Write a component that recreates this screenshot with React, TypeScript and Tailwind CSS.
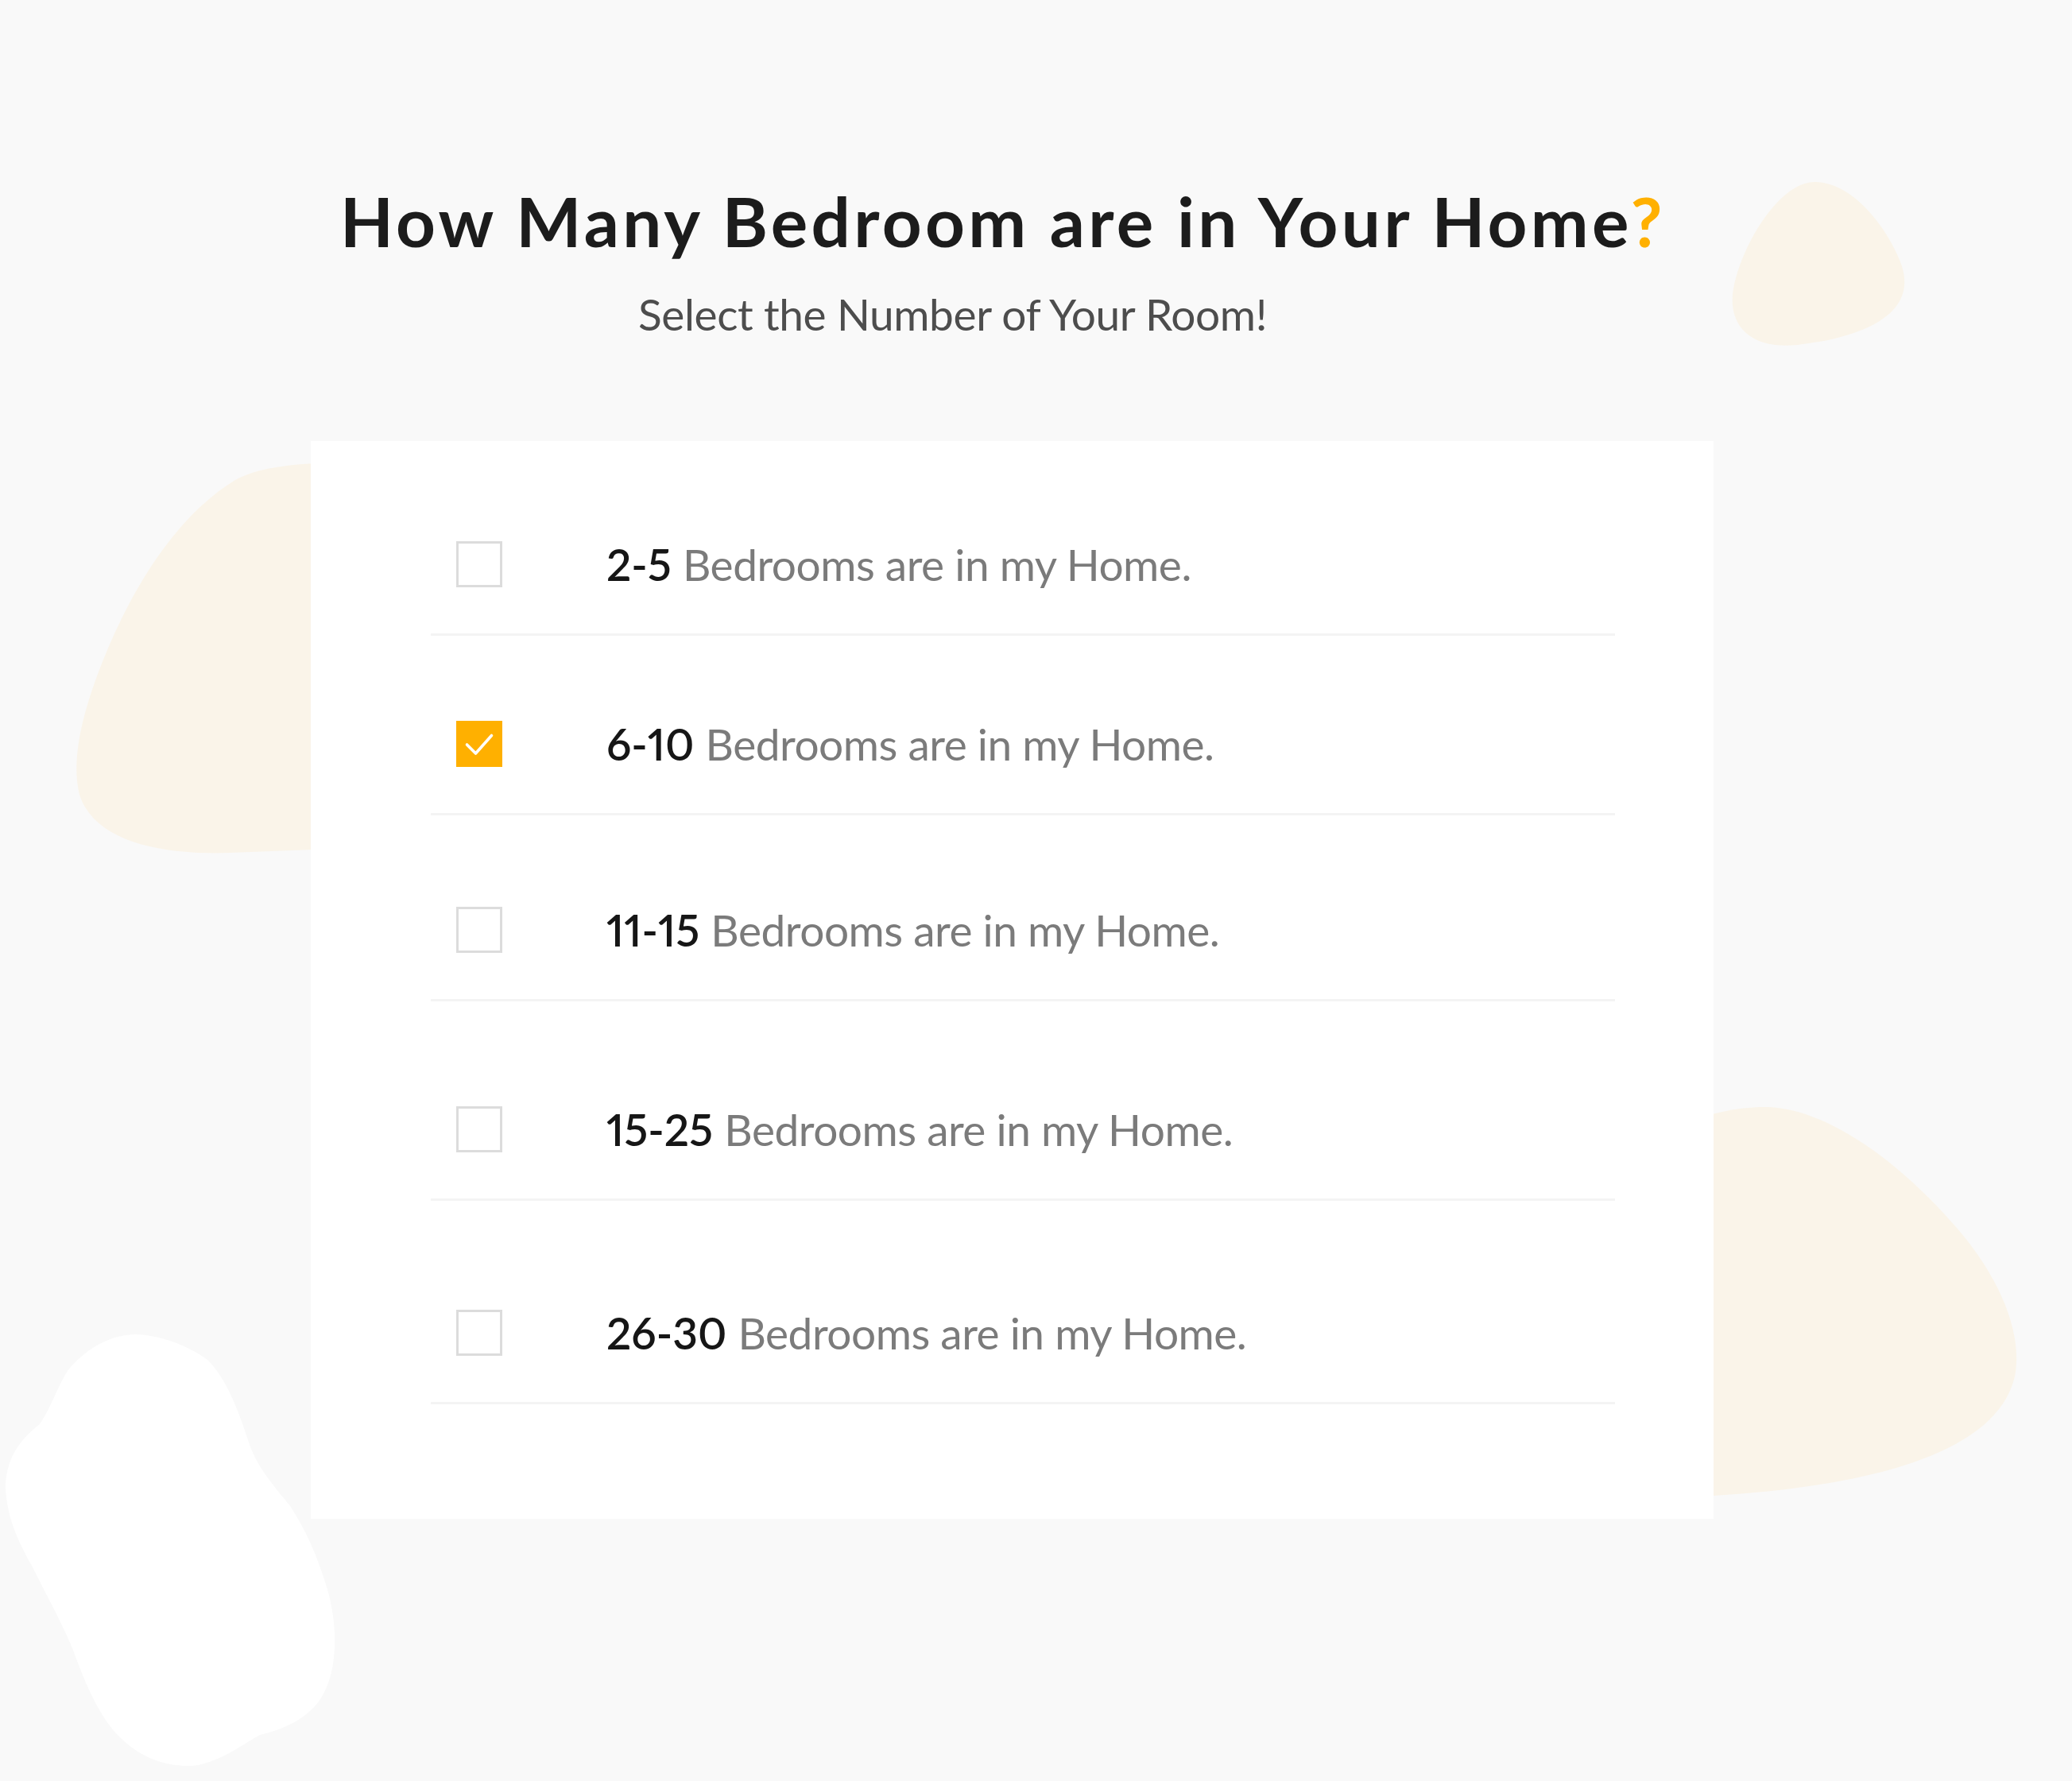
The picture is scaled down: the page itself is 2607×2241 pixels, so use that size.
import React from "react";

const rows = [
  { num: "2-5", checked: false, pad: "pt-0" },
  { num: "6-10", checked: true, pad: "pt-[107px]" },
  { num: "11-15", checked: false, pad: "pt-[115px]" },
  { num: "15-25", checked: false, pad: "pt-[132px]" },
  { num: "26-30", checked: false, pad: "pt-[137px]" },
];

function Checkbox({ checked }: { checked: boolean }) {
  if (checked) {
    return (
      <div className="w-[58px] h-[58px] shrink-0 bg-[#ffb000] flex items-center justify-center">
        <svg width="58" height="58" viewBox="0 0 58 58">
          <path d="M13.5 30 L24.5 41 L44.5 18.5" fill="none" stroke="#ffffff" strokeWidth="3.6" strokeLinecap="round" strokeLinejoin="round" />
        </svg>
      </div>
    );
  }
  return <div className="w-[58px] h-[58px] shrink-0 border-[3px] border-[#dcdcdc] bg-white" />;
}

export default function App() {
  return (
    <div className="relative w-[2607px] h-[2241px] bg-[#f9f9f9] overflow-hidden font-['Lato',sans-serif]">
      <svg className="absolute inset-0" width="2607" height="2241" viewBox="0 0 2607 2241">
        {/* top right blob */}
        <path
          d="M2283,229 C2330,229 2375,285 2393,335 C2412,395 2345,424 2262,434 C2205,440 2176,412 2180,370 C2186,318 2236,229 2283,229 Z"
          fill="#faf4e9"
        />
        {/* left blob */}
        <path
          d="M420,582 C350,584 318,592 296,604 C228,645 170,730 130,830 C100,905 90,960 100,1000 C120,1062 210,1076 290,1073 L420,1068 Z"
          fill="#faf4e9"
        />
        {/* right blob */}
        <path
          d="M2100,1420 C2150,1400 2190,1392 2225,1393 C2300,1396 2390,1462 2462,1545 C2520,1612 2545,1682 2535,1732 C2512,1830 2350,1870 2157,1882 L2100,1884 Z"
          fill="#faf4e9"
        />
        {/* white blob bottom left */}
        <path
          d="M170,1679 C205,1680 240,1695 262,1712 C285,1735 300,1775 312,1812 C322,1845 345,1870 365,1895 C385,1925 400,1960 412,2000 C425,2045 424,2095 410,2125 C395,2160 360,2175 327,2183 C305,2195 285,2212 250,2221 C215,2225 180,2215 150,2185 C125,2160 108,2120 93,2079 C82,2050 60,2010 40,1970 C20,1935 8,1905 7,1870 C8,1840 20,1815 50,1792 C65,1770 72,1745 85,1725 C105,1700 135,1680 170,1679 Z"
          fill="#ffffff"
        />
      </svg>

      <div className="relative z-10 flex flex-col pt-[234px] pl-[391px]">
        <h1 className="pl-[37px] text-[87px] leading-[87px] font-bold tracking-[4.3px] text-[#1c1c1c] whitespace-nowrap">
          How Many Bedroom are in Your Home<span className="text-[#ffb000]">?</span>
        </h1>
        <p className="mt-[47px] pl-[412px] text-[55px] leading-[55px] tracking-[-0.4px] text-[#4d4d4d] whitespace-nowrap">
          Select the Number of Your Room!
        </p>

        <div className="mt-[132px] w-[1765px] bg-white pl-[151px] pr-[124px] pt-[126px] pb-[144px]">
          {rows.map((r) => (
            <div
              key={r.num}
              className={`${r.pad} pb-[58px] pl-[32px] flex items-center border-b-[3px] border-[#f4f4f4]`}
            >
              <Checkbox checked={r.checked} />
              <div className="ml-[131px] text-[55px] leading-[55px] whitespace-nowrap">
                <span className="font-semibold text-[#161616] proportional-nums">{r.num}</span>{" "}
                <span className="text-[#7b7b7b] tracking-[-0.5px]">Bedrooms are in my Home.</span>
              </div>
            </div>
          ))}
        </div>
      </div>
    </div>
  );
}
